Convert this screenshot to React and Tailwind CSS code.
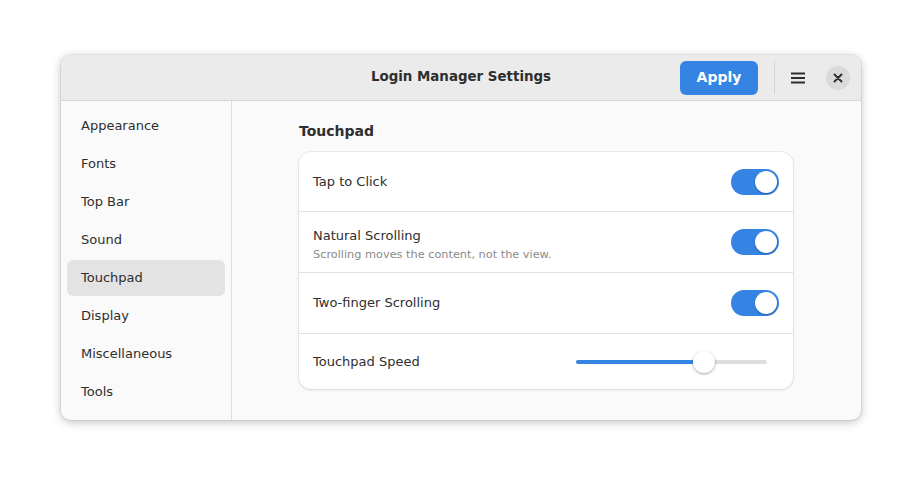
import React, { useState } from 'react';

const sections = ['Appearance', 'Fonts', 'Top Bar', 'Sound', 'Touchpad', 'Display', 'Miscellaneous', 'Tools'];

const Toggle = ({ on, onChange }) => (
    <button
        onClick={() => onChange(!on)}
        className={`relative w-[48px] h-[26px] rounded-full shrink-0 ${on ? 'bg-[#3584e4]' : 'bg-[#d5d5d5]'}`}
    >
        <span
            className={`absolute top-[2px] w-[22px] h-[22px] rounded-full bg-white shadow-[0_1px_2px_rgba(0,0,0,0.3)] ${on ? 'left-[24px]' : 'left-[2px]'}`}
        />
    </button>
);

const App = () => {
    const [selected, setSelected] = useState('Touchpad');
    const [tap, setTap] = useState(true);
    const [natural, setNatural] = useState(true);
    const [twoFinger, setTwoFinger] = useState(true);
    const speed = 67;

    return (
        <div className="w-[922px] h-[487px] bg-white pt-[55px] pl-[61px]" style={{ fontFamily: '"DejaVu Sans", sans-serif' }}>
            <div className="w-[800px] h-[365px] rounded-[10px] overflow-hidden bg-[#fafafa] shadow-[0_2px_10px_rgba(0,0,0,0.25),0_0_0_1px_rgba(0,0,0,0.06)] flex flex-col">
                {/* header bar */}
                <div className="h-[46px] shrink-0 bg-[#ebebeb] border-b border-[#d6d6d6] flex items-center relative">
                    <div className="absolute inset-0 flex items-center justify-center pointer-events-none">
                        <span className="text-[13.4px] font-bold text-[#2e2e2e]">Login Manager Settings</span>
                    </div>
                    <div className="ml-auto flex items-center pr-[11px] relative">
                        <button className="w-[78px] h-[34px] rounded-[6px] bg-[#3584e4] text-white text-[14px] font-bold">Apply</button>
                        <div className="w-px h-[33px] bg-[#d3d3d3] ml-[16px] mr-[11px]" />
                        <button className="w-[24px] h-[24px] flex items-center justify-center text-[#2e2e2e]">
                            <svg width="16" height="16" viewBox="0 0 16 16">
                                <rect x="1" y="2.5" width="14" height="2" fill="currentColor" />
                                <rect x="1" y="7" width="14" height="2" fill="currentColor" />
                                <rect x="1" y="11.5" width="14" height="2" fill="currentColor" />
                            </svg>
                        </button>
                        <button className="ml-[16px] w-[24px] h-[24px] rounded-full bg-[#dadada] flex items-center justify-center text-[#2e2e2e]">
                            <svg width="10" height="10" viewBox="0 0 10 10">
                                <path d="M1.5 1.5 L8.5 8.5 M8.5 1.5 L1.5 8.5" stroke="currentColor" strokeWidth="2" strokeLinecap="round" />
                            </svg>
                        </button>
                    </div>
                </div>

                <div className="flex flex-1 min-h-0">
                    {/* sidebar */}
                    <div className="w-[171px] shrink-0 border-r border-[#dedede] bg-[#fafafa] px-[6px] pt-[6px]">
                        {sections.map((s) => (
                            <div
                                key={s}
                                onClick={() => setSelected(s)}
                                className={`flex items-center px-[14px] rounded-[6px] text-[13px] text-[#2e2e2e] cursor-default ${selected === s ? 'bg-[#e3e3e3] h-[36px] my-[1px]' : 'h-[38px]'}`}
                            >
                                {s}
                            </div>
                        ))}
                    </div>

                    {/* content */}
                    <div className="flex-1 pl-[67px] pt-[21px]">
                        <h2 className="text-[14px] font-bold text-[#2e2e2e] mb-[12px] leading-[18px]">Touchpad</h2>
                        <div className="w-[494px] bg-white rounded-[12px] shadow-[0_0_0_1px_rgba(0,0,0,0.05),0_1px_3px_rgba(0,0,0,0.1)]">
                            <div className="h-[60px] flex items-center px-[14px] border-b border-[#e2e2e2]">
                                <span className="text-[13px] text-[#2e2e2e] flex-1">Tap to Click</span>
                                <Toggle on={tap} onChange={setTap} />
                            </div>
                            <div className="h-[61px] flex items-center px-[14px] border-b border-[#e2e2e2]">
                                <div className="flex-1 flex flex-col pt-[4px]">
                                    <span className="text-[13px] text-[#2e2e2e] leading-[18px]">Natural Scrolling</span>
                                    <span className="text-[11.3px] text-[#8a8a8a] mt-[3px] leading-[14px]">Scrolling moves the content, not the view.</span>
                                </div>
                                <Toggle on={natural} onChange={setNatural} />
                            </div>
                            <div className="h-[61px] flex items-center px-[14px] border-b border-[#e2e2e2]">
                                <span className="text-[13px] text-[#2e2e2e] flex-1">Two-finger Scrolling</span>
                                <Toggle on={twoFinger} onChange={setTwoFinger} />
                            </div>
                            <div className="h-[55px] flex items-center pl-[14px] pr-[26px]">
                                <span className="text-[13px] text-[#2e2e2e] flex-1">Touchpad Speed</span>
                                <div className="relative w-[191px] h-[22px] flex items-center">
                                    <div className="w-full h-[4px] rounded-full bg-[#dedede]" />
                                    <div className="absolute left-0 h-[4px] rounded-full bg-[#3584e4]" style={{ width: `${speed}%` }} />
                                    <div
                                        className="absolute w-[22px] h-[22px] rounded-full bg-white shadow-[0_1px_3px_rgba(0,0,0,0.35)]"
                                        style={{ left: `calc(${speed}% - 11px)` }}
                                    />
                                </div>
                            </div>
                        </div>
                    </div>
                </div>
            </div>
        </div>
    );
};

export default App;
